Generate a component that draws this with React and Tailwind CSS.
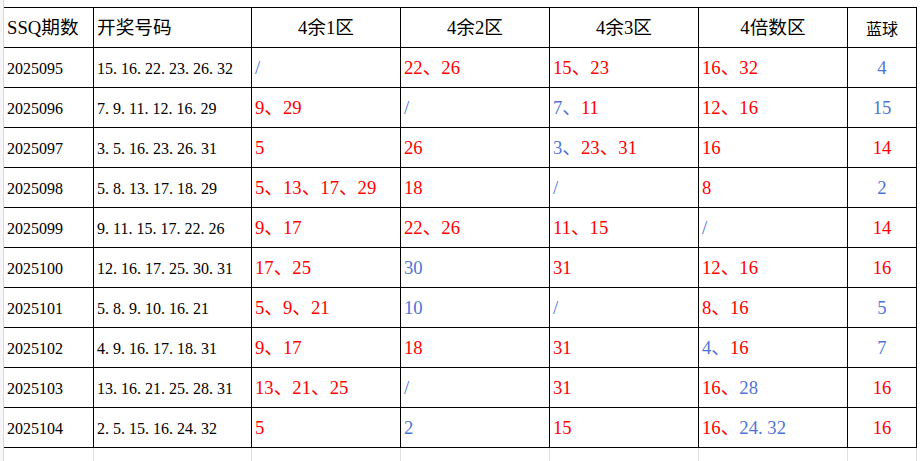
const RED = "text-[#ff0000]"
const BLUE = "text-[#4f74d9]"

const serif = "font-['Liberation_Serif','Noto_Sans_CJK_SC',serif]"

// [期数, 开奖号码, 4余1, 4余2, 4余3, 4倍数, 蓝球]
const rows = [
    ["2025095", "15.16.22.23.26.32", [["b", "/"]], [["r", "22、26"]], [["r", "15、23"]], [["r", "16、32"]], ["b", "4"]],
    ["2025096", "7.9.11.12.16.29", [["r", "9、29"]], [["b", "/"]], [["b", "7、"], ["r", "11"]], [["r", "12、16"]], ["b", "15"]],
    ["2025097", "3.5.16.23.26.31", [["r", "5"]], [["r", "26"]], [["b", "3、"], ["r", "23、31"]], [["r", "16"]], ["r", "14"]],
    ["2025098", "5.8.13.17.18.29", [["r", "5、13、17、29"]], [["r", "18"]], [["b", "/"]], [["r", "8"]], ["b", "2"]],
    ["2025099", "9.11.15.17.22.26", [["r", "9、17"]], [["r", "22、26"]], [["r", "11、15"]], [["b", "/"]], ["r", "14"]],
    ["2025100", "12.16.17.25.30.31", [["r", "17、25"]], [["b", "30"]], [["r", "31"]], [["r", "12、16"]], ["r", "16"]],
    ["2025101", "5.8.9.10.16.21", [["r", "5、9、21"]], [["b", "10"]], [["b", "/"]], [["r", "8、16"]], ["b", "5"]],
    ["2025102", "4.9.16.17.18.31", [["r", "9、17"]], [["r", "18"]], [["r", "31"]], [["b", "4、"], ["r", "16"]], ["b", "7"]],
    ["2025103", "13.16.21.25.28.31", [["r", "13、21、25"]], [["b", "/"]], [["r", "31"]], [["r", "16、"], ["b", "28"]], ["r", "16"]],
    ["2025104", "2.5.15.16.24.32", [["r", "5"]], [["b", "2"]], [["r", "15"]], [["r", "16、"], ["b", "24.32"]], ["r", "16"]],
]

const grid = "grid grid-cols-[90px_158px_149px_149px_149px_149px_69px]"

const Dotted = ({ text }) => {
    const parts = text.split(".")
    return parts.map((p, i) => (
        <span key={i}>
            {p}
            {i < parts.length - 1 && <span className="inline-block w-[0.5em]">.</span>}
        </span>
    ))
}

const Colored = ({ segs }) => (
    <>
        {segs.map(([c, t], i) => (
            <span key={i} className={c === "r" ? RED : BLUE}>
                <Dotted text={t} />
            </span>
        ))}
    </>
)

const cell = "flex items-end border-r border-black leading-none"

const App = () => {
    return (
        <div className={`w-[920px] h-[461px] bg-white flex overflow-hidden ${serif}`}>
            <div className="w-[4px] h-full border-r border-[#dcdcdc] bg-[#f7f7f7]" />
            <div className="flex flex-col pt-[7px] h-full">
                <div className="border-t border-black">
                    <div className={`${grid} h-10 border-b border-black text-[18.67px] text-black`}>
                        <div className={`${cell} pl-[3px] pb-[9px]`}>SSQ期数</div>
                        <div className={`${cell} pl-[3px] pb-[9px]`}>开奖号码</div>
                        <div className={`${cell} justify-center pb-[9px]`}>4余1区</div>
                        <div className={`${cell} justify-center pb-[9px]`}>4余2区</div>
                        <div className={`${cell} justify-center pb-[9px]`}>4余3区</div>
                        <div className={`${cell} justify-center pb-[9px]`}>4倍数区</div>
                        <div className={`${cell} justify-center pb-[11px] text-[16px] font-['Noto_Sans_CJK_SC',sans-serif]`}>蓝球</div>
                    </div>
                    {rows.map(([no, draw, a, b, c, d, blue]) => (
                        <div key={no} className={`${grid} h-10 border-b border-black`}>
                            <div className={`${cell} pl-[3px] pb-[10px] text-[16px] text-black`}>{no}</div>
                            <div className={`${cell} pl-[3px] pb-[10px] text-[16px] text-black`}>
                                <Dotted text={draw} />
                            </div>
                            {[a, b, c, d].map((segs, i) => (
                                <div key={i} className={`${cell} pl-[3px] pb-[9px] text-[18.67px]`}>
                                    <Colored segs={segs} />
                                </div>
                            ))}
                            <div className={`${cell} justify-center pb-[9px] text-[18.67px] ${blue[0] === "r" ? RED : BLUE}`}>
                                {blue[1]}
                            </div>
                        </div>
                    ))}
                </div>
                <div className={`${grid} flex-1`}>
                    {[0, 1, 2, 3, 4, 5, 6].map((i) => (
                        <div key={i} className="border-r border-[#e0e0e0]" />
                    ))}
                </div>
            </div>
        </div>
    )
}

export default App
